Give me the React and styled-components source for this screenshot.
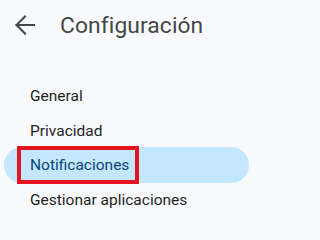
import styled, { createGlobalStyle } from 'styled-components';

const GlobalStyle = createGlobalStyle`
  html, body {
    margin: 0;
    padding: 0;
    background: #f8fafd;
  }
  body {
    font-family: Roboto, "Liberation Sans", Arial, sans-serif;
  }
`;

const Page = styled.div`
  width: 268px;
  height: 222px;
  overflow: hidden;
  background: #f8fafd;
`;

const Header = styled.header`
  display: flex;
  align-items: center;
  gap: 24px;
  height: 50px;
  padding-left: 12px;
`;

const BackIcon = styled.svg`
  width: 24px;
  height: 24px;
  flex: none;
`;

const Title = styled.h1`
  margin: 0;
  font-size: 22.8px;
  font-weight: 400;
  color: #444746;
  letter-spacing: 0.1px;
`;

const Nav = styled.nav`
  display: flex;
  flex-direction: column;
  margin-top: 28.75px;
`;

const Item = styled.a`
  position: relative;
  display: flex;
  align-items: center;
  width: 245px;
  height: ${p => (p.$active ? '36px' : '34.5px')};
  margin: ${p => (p.$active ? '-0.75px 0 -0.75px 4px' : '0 0 0 4px')};
  padding-left: 26px;
  box-sizing: border-box;
  border-radius: 18px;
  background: ${p => (p.$active ? '#c2e7ff' : 'transparent')};
  color: ${p => (p.$active ? '#0b4473' : '#1f1f1f')};
  font-size: 15.5px;
  text-decoration: none;
  cursor: pointer;
`;

const Highlight = styled.span`
  position: absolute;
  left: 13px;
  top: -1px;
  width: 122px;
  height: 38px;
  box-sizing: border-box;
  border: 4.5px solid #e3141f;
  pointer-events: none;
`;

const items = ['General', 'Privacidad', 'Notificaciones', 'Gestionar aplicaciones'];

export default function App() {
  return (
    <Page>
      <GlobalStyle />
      <Header>
        <BackIcon viewBox="0 0 24 24" fill="none">
          <path
            d="M22 12H4.5M13 3.5L4.5 12L13 20.5"
            stroke="#444746"
            strokeWidth="2.1"
            strokeLinecap="square"
          />
        </BackIcon>
        <Title>Configuración</Title>
      </Header>
      <Nav>
        {items.map(label => {
          const active = label === 'Notificaciones';
          return (
            <Item key={label} $active={active}>
              {label}
              {active && <Highlight />}
            </Item>
          );
        })}
      </Nav>
    </Page>
  );
}
